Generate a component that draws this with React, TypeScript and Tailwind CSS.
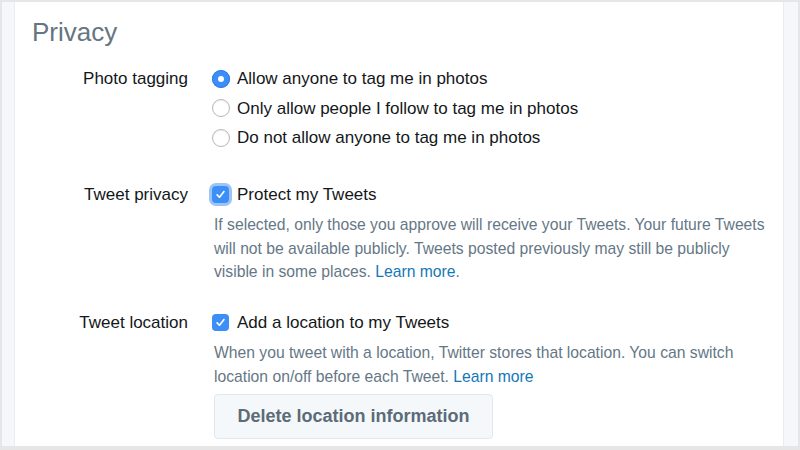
import React, { useState } from 'react';

const font = { fontFamily: '"Liberation Sans", Arial, sans-serif' };

const Radio = ({ checked, onClick }: { checked: boolean; onClick: () => void }) => (
  <button
    type="button"
    onClick={onClick}
    className={`flex h-[18px] w-[18px] shrink-0 items-center justify-center rounded-full ${
      checked ? 'bg-[#3b8ff6] shadow-[inset_0_0_0_1px_#2f7fe6]' : 'border border-[#b7b7b7] bg-white shadow-[inset_0_1px_1px_rgba(0,0,0,0.06)]'
    }`}
  >
    {checked && <span className="h-[6px] w-[6px] rounded-full bg-white" />}
  </button>
);

const Checkbox = ({ checked, focused, onClick }: { checked: boolean; focused?: boolean; onClick: () => void }) => (
  <button
    type="button"
    onClick={onClick}
    className={`flex h-[17px] w-[17px] shrink-0 items-center justify-center rounded-[4px] ${
      checked ? 'bg-[#3b8ff6]' : 'border border-[#b7b7b7] bg-white'
    } ${focused ? 'ring-[3px] ring-[#9cc4f5]' : ''}`}
  >
    {checked && (
      <svg width="11" height="11" viewBox="0 0 12 12" fill="none">
        <path d="M2.3 6.4 L4.9 9 L9.8 2.8" stroke="white" strokeWidth="1.8" strokeLinecap="round" strokeLinejoin="round" />
      </svg>
    )}
  </button>
);

const tagOptions = [
  'Allow anyone to tag me in photos',
  'Only allow people I follow to tag me in photos',
  'Do not allow anyone to tag me in photos',
];

const App: React.FC = () => {
  const [tagging, setTagging] = useState(0);
  const [protect, setProtect] = useState(true);
  const [location, setLocation] = useState(true);

  return (
    <div className="h-[450px] w-[800px] overflow-hidden bg-[#e6e6e6] pt-[2px] pb-[4px] px-[2px]" style={font}>
      <div className="flex h-full">
        {/* left gutter */}
        <div className="w-[13px] border-r border-[#e8edf1] bg-[#f5f8fa]" />

        {/* settings panel */}
        <div className="flex-1 bg-white pl-[17px] pt-[14px]">
          <h2 className="text-[26px] leading-[32px] text-[#66757f]">Privacy</h2>

          <div className="mt-[16px] grid grid-cols-[156px_1fr] gap-x-[24px] text-[17px] text-[#14171a]">
            {/* Photo tagging */}
            <div className="text-right leading-[29.5px]">Photo tagging</div>
            <div className="flex flex-col">
              {tagOptions.map((opt, i) => (
                <label key={opt} className="flex h-[29.5px] items-center gap-[7px]">
                  <Radio checked={tagging === i} onClick={() => setTagging(i)} />
                  <span>{opt}</span>
                </label>
              ))}
            </div>

            {/* Tweet privacy */}
            <div className="mt-[27px] text-right leading-[29.5px]">Tweet privacy</div>
            <div className="mt-[27px]">
              <label className="flex h-[29.5px] items-center gap-[8px]">
                <Checkbox checked={protect} focused onClick={() => setProtect(!protect)} />
                <span>Protect my Tweets</span>
              </label>
              <p className="ml-[2px] mt-[4px] w-[562px] text-[15.7px] leading-[23.5px] text-[#657786]">
                If selected, only those you approve will receive your Tweets. Your future Tweets will not be available
                publicly. Tweets posted previously may still be publicly visible in some places.{' '}
                <a href="#" className="text-[#1577b8]">Learn more</a>.
              </p>
            </div>

            {/* Tweet location */}
            <div className="mt-[24px] text-right leading-[29.5px]">Tweet location</div>
            <div className="mt-[24px]">
              <label className="flex h-[29.5px] items-center gap-[8px]">
                <Checkbox checked={location} onClick={() => setLocation(!location)} />
                <span>Add a location to my Tweets</span>
              </label>
              <p className="ml-[2px] mt-[4px] w-[562px] text-[15.7px] leading-[23.5px] text-[#657786]">
                When you tweet with a location, Twitter stores that location. You can switch location on/off before each
                Tweet. <a href="#" className="text-[#1577b8]">Learn more</a>
              </p>
              <button
                type="button"
                className="ml-[2px] mt-[6px] h-[45px] w-[279px] rounded-[4px] border border-[#e1e8ed] bg-[#f5f8fa] text-[18px] font-bold text-[#5b6b78]"
              >
                Delete location information
              </button>
            </div>
          </div>
        </div>

        {/* right gutter */}
        <div className="w-[15px] border-l border-[#e8edf1] bg-[#f5f8fa]" />
      </div>
    </div>
  );
};

export default App;
